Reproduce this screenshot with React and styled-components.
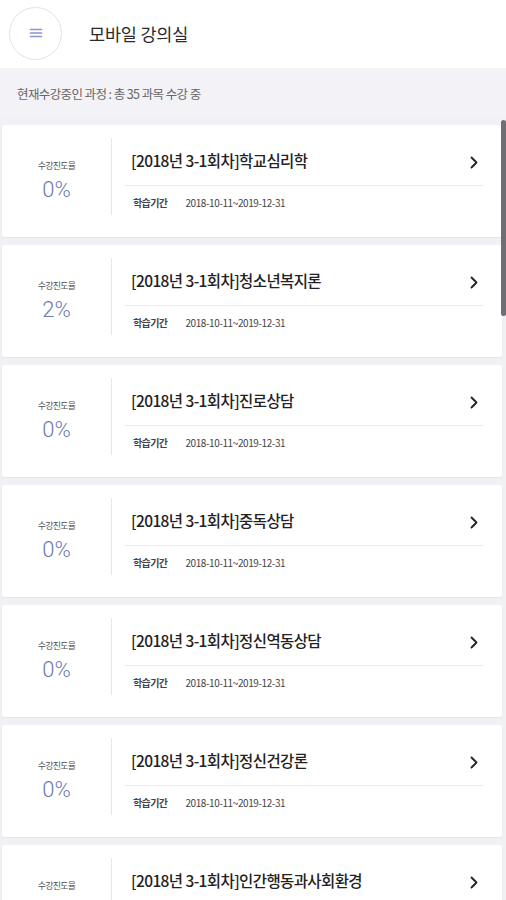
import React from "react";
import styled, { createGlobalStyle } from "styled-components";

const Global = createGlobalStyle`
  html, body { margin: 0; padding: 0; background: #f1f0f5; }
  body { font-family: "Noto Sans CJK KR", "Noto Sans", sans-serif; }
  * { box-sizing: border-box; }
`;

const Page = styled.div`
  position: relative;
  width: 506px;
  height: 900px;
  background: #f1f0f5;
  overflow: hidden;
`;

const Header = styled.header`
  height: 68px;
  background: #fff;
  display: flex;
  align-items: center;
  padding-left: 9px;
  gap: 27px;
`;

const MenuButton = styled.button`
  width: 53px;
  height: 53px;
  border-radius: 50%;
  border: 1.5px solid #e2e2e6;
  background: #fff;
  display: flex;
  align-items: center;
  justify-content: center;
  padding: 0;
  margin-top: -2px;
`;

const Title = styled.h1`
  margin: 0;
  font-size: 17.5px;
  font-weight: 400;
  color: #2b2b2b;
  margin-top: -2px;
  letter-spacing: -0.2px;
`;

const InfoBar = styled.div`
  height: 50px;
  display: flex;
  align-items: center;
  padding-left: 17px;
  font-size: 12.5px;
  color: #666;
  letter-spacing: -0.6px;
  background: #f3f2f7;
`;

const List = styled.div`
  display: flex;
  flex-direction: column;
  gap: 8px;
  padding: 7px 4px 0 2px;
`;

const Card = styled.div`
  height: 112px;
  flex-shrink: 0;
  background: #fff;
  border-radius: 2px;
  box-shadow: 0 1px 2px rgba(0, 0, 0, 0.06);
  display: flex;
  align-items: flex-start;
`;

const Progress = styled.div`
  width: 110px;
  height: 77px;
  margin-top: 13px;
  border-right: 1px solid #e6e6ea;
  display: flex;
  flex-direction: column;
  align-items: center;
  padding-top: 22px;
`;

const ProgressLabel = styled.div`
  font-size: 9px;
  color: #555;
  letter-spacing: -0.8px;
  line-height: 12px;
`;

const ProgressValue = styled.div`
  font-family: "Roboto", "Noto Sans", sans-serif;
  font-size: 22px;
  font-weight: 300;
  color: #6a78b4;
  line-height: 26px;
  margin-top: 5px;
`;

const Body = styled.div`
  flex: 1;
  display: flex;
  flex-direction: column;
  padding: 14px 18px 0 12px;
`;

const TopRow = styled.div`
  display: flex;
  align-items: center;
  justify-content: space-between;
  height: 47px;
  padding: 0 6px 0 7px;
  border-bottom: 1.5px solid #ececef;
`;

const CourseTitle = styled.div`
  font-size: 15.5px;
  font-weight: 500;
  color: #222;
  letter-spacing: -0.6px;
  margin-top: -4px;
`;

const BottomRow = styled.div`
  display: flex;
  align-items: center;
  gap: 18px;
  height: 32px;
  padding-left: 9px;
`;

const PeriodLabel = styled.span`
  font-size: 10px;
  font-weight: 700;
  color: #444;
  letter-spacing: -0.6px;
`;

const PeriodValue = styled.span`
  font-size: 10px;
  color: #444;
  letter-spacing: -0.4px;
`;

const Scrollbar = styled.div`
  position: absolute;
  right: 0;
  top: 120px;
  width: 5px;
  height: 196px;
  border-radius: 3px;
  background: #6e6e74;
`;

const Hamburger = () => (
  <svg width="14" height="12" viewBox="0 0 14 12">
    <g stroke="#8d95c6" strokeWidth="1.6" strokeLinecap="round">
      <line x1="1.5" y1="2.5" x2="12.5" y2="2.5" />
      <line x1="1.5" y1="6" x2="12.5" y2="6" />
      <line x1="1.5" y1="9.5" x2="12.5" y2="9.5" />
    </g>
  </svg>
);

const Chevron = () => (
  <svg width="8" height="13" viewBox="0 0 8 13">
    <path d="M1.5 1.5 L6.5 6.5 L1.5 11.5" fill="none" stroke="#222" strokeWidth="1.8" strokeLinecap="round" strokeLinejoin="round" />
  </svg>
);

const courses = [
  { name: "학교심리학", pct: 0 },
  { name: "청소년복지론", pct: 2 },
  { name: "진로상담", pct: 0 },
  { name: "중독상담", pct: 0 },
  { name: "정신역동상담", pct: 0 },
  { name: "정신건강론", pct: 0 },
  { name: "인간행동과사회환경", pct: 0 },
];

export default function App() {
  return (
    <>
      <Global />
      <Page>
        <Header>
          <MenuButton aria-label="menu">
            <Hamburger />
          </MenuButton>
          <Title>모바일 강의실</Title>
        </Header>
        <InfoBar>현재수강중인 과정 : 총 35 과목 수강 중</InfoBar>
        <List>
          {courses.map((c, i) => (
            <Card key={i}>
              <Progress>
                <ProgressLabel>수강진도율</ProgressLabel>
                <ProgressValue>{c.pct}%</ProgressValue>
              </Progress>
              <Body>
                <TopRow>
                  <CourseTitle>[2018년 3-1회차]{c.name}</CourseTitle>
                  <Chevron />
                </TopRow>
                <BottomRow>
                  <PeriodLabel>학습기간</PeriodLabel>
                  <PeriodValue>2018-10-11~2019-12-31</PeriodValue>
                </BottomRow>
              </Body>
            </Card>
          ))}
        </List>
        <Scrollbar />
      </Page>
    </>
  );
}
